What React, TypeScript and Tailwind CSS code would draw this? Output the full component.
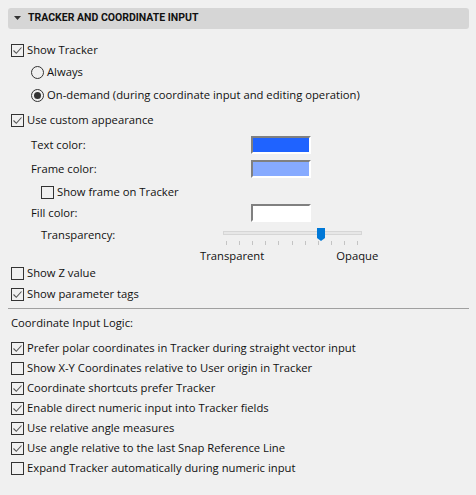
import React from "react";

const font = { fontFamily: '"Open Sans", "Noto Sans", sans-serif' };

function Check({ checked }: { checked: boolean }) {
  return (
    <span className="w-[13px] h-[13px] border border-[#333333] bg-transparent flex items-center justify-center shrink-0">
      {checked && (
        <svg width="11" height="11" viewBox="0 0 11 11">
          <path d="M1.5 5.5 L4.3 8.3 L9.5 2.5" fill="none" stroke="#555555" strokeWidth="1.1" />
        </svg>
      )}
    </span>
  );
}

function Radio({ checked }: { checked: boolean }) {
  return (
    <span className="w-[13px] h-[13px] rounded-full border border-[#333333] flex items-center justify-center shrink-0">
      {checked && <span className="w-[7px] h-[7px] rounded-full bg-[#333333]" />}
    </span>
  );
}

function CheckRow({ checked, label, className = "" }: { checked: boolean; label: string; className?: string }) {
  return (
    <div className={`flex items-center gap-[3px] h-[20px] ${className}`}>
      <Check checked={checked} />
      <span>{label}</span>
    </div>
  );
}

function Swatch({ color }: { color: string }) {
  return (
    <span
      className={`w-[60px] h-[18px] border-t-2 border-l-2 border-t-[#808080] border-l-[#808080] border-b-2 border-r-2 border-b-white border-r-white ${color}`}
    />
  );
}

export default function App() {
  const ticks = [0, 1, 2, 3, 4, 5, 6, 7, 8, 9, 10];
  return (
    <div className="w-[476px] h-[495px] bg-[#f0f0f0] text-[11.25px] text-[#111111] leading-none pt-[8px] px-[8px]" style={font}>
      <div className="h-[21px] w-[461px] rounded-[3px] bg-[#d6d6d6] flex items-center pl-[6px]">
        <svg width="7" height="5" viewBox="0 0 7 5" className="mr-[7px]">
          <path d="M0 0 H7 L3.5 4 Z" fill="#333333" />
        </svg>
        <span className="font-bold text-[10.5px] tracking-[0px]" style={{ fontFamily: 'Roboto, "Open Sans", sans-serif' }}>
          TRACKER AND COORDINATE INPUT
        </span>
      </div>

      <div className="pl-[3px] pt-[11px]">
        <CheckRow checked label="Show Tracker" />
        <div className="flex items-center gap-[3px] h-[22px] pl-[20px] mt-[1px]">
          <Radio checked={false} />
          <span>Always</span>
        </div>
        <div className="flex items-center gap-[3px] h-[22px] pl-[20px] mt-[1px]">
          <Radio checked />
          <span>On-demand (during coordinate input and editing operation)</span>
        </div>
        <CheckRow checked label="Use custom appearance" className="mt-[4px]" />

        <div className="pl-[20px]">
          <div className="flex items-center h-[18px] mt-[6px]">
            <span className="w-[220px]">Text color:</span>
            <Swatch color="bg-[#1f63ff]" />
          </div>
          <div className="flex items-center h-[18px] mt-[6px]">
            <span className="w-[220px]">Frame color:</span>
            <Swatch color="bg-[#86aaff]" />
          </div>
          <CheckRow checked={false} label="Show frame on Tracker" className="pl-[10px] mt-[4px]" />
          <div className="flex items-center h-[18px] mt-[2px]">
            <span className="w-[220px]">Fill color:</span>
            <Swatch color="bg-white" />
          </div>
          <div className="flex mt-[6px] pl-[10px] h-[17px]">
            <div className="w-[182px] h-[14px] flex items-center">Transparency:</div>
            <div className="relative w-[139px] h-[17px]">
              <div className="absolute left-0 right-0 top-[3px] h-[4px] bg-[#e7e7e7] border border-[#d6d6d6]" />
              <svg className="absolute left-[94px] top-0" width="9" height="13" viewBox="0 0 9 13">
                <path d="M0 0 H8 V10 L4 13 L0 10 Z" fill="#0078d7" />
              </svg>
              {ticks.map((t) => (
                <span
                  key={t}
                  className="absolute top-[13px] w-[1px] h-[4px] bg-[#c4c4c4]"
                  style={{ left: 3 + Math.round(t * 13.1) }}
                />
              ))}
            </div>
          </div>
          <div className="flex h-[16px] items-center mt-[3px]">
            <span className="ml-[169px]">Transparent</span>
            <span className="ml-[72px]">Opaque</span>
          </div>
        </div>

        <CheckRow checked={false} label="Show Z value" className="h-[18px] -mt-[1px]" />
        <CheckRow checked label="Show parameter tags" className="h-[18px] mt-[1px]" />
      </div>

      <div className="h-px w-[461px] bg-[#a0a0a0] mt-[4px]" />

      <div className="pl-[3px]">
        <div className="h-[18px] flex items-center mt-[5px]">Coordinate Input Logic:</div>
        <div className="mt-[6px]">
          <CheckRow checked label="Prefer polar coordinates in Tracker during straight vector input" />
          <CheckRow checked={false} label="Show X-Y Coordinates relative to User origin in Tracker" />
          <CheckRow checked label="Coordinate shortcuts prefer Tracker" />
          <CheckRow checked label="Enable direct numeric input into Tracker fields" />
          <CheckRow checked label="Use relative angle measures" />
          <CheckRow checked label="Use angle relative to the last Snap Reference Line" />
          <CheckRow checked={false} label="Expand Tracker automatically during numeric input" />
        </div>
      </div>
    </div>
  );
}
